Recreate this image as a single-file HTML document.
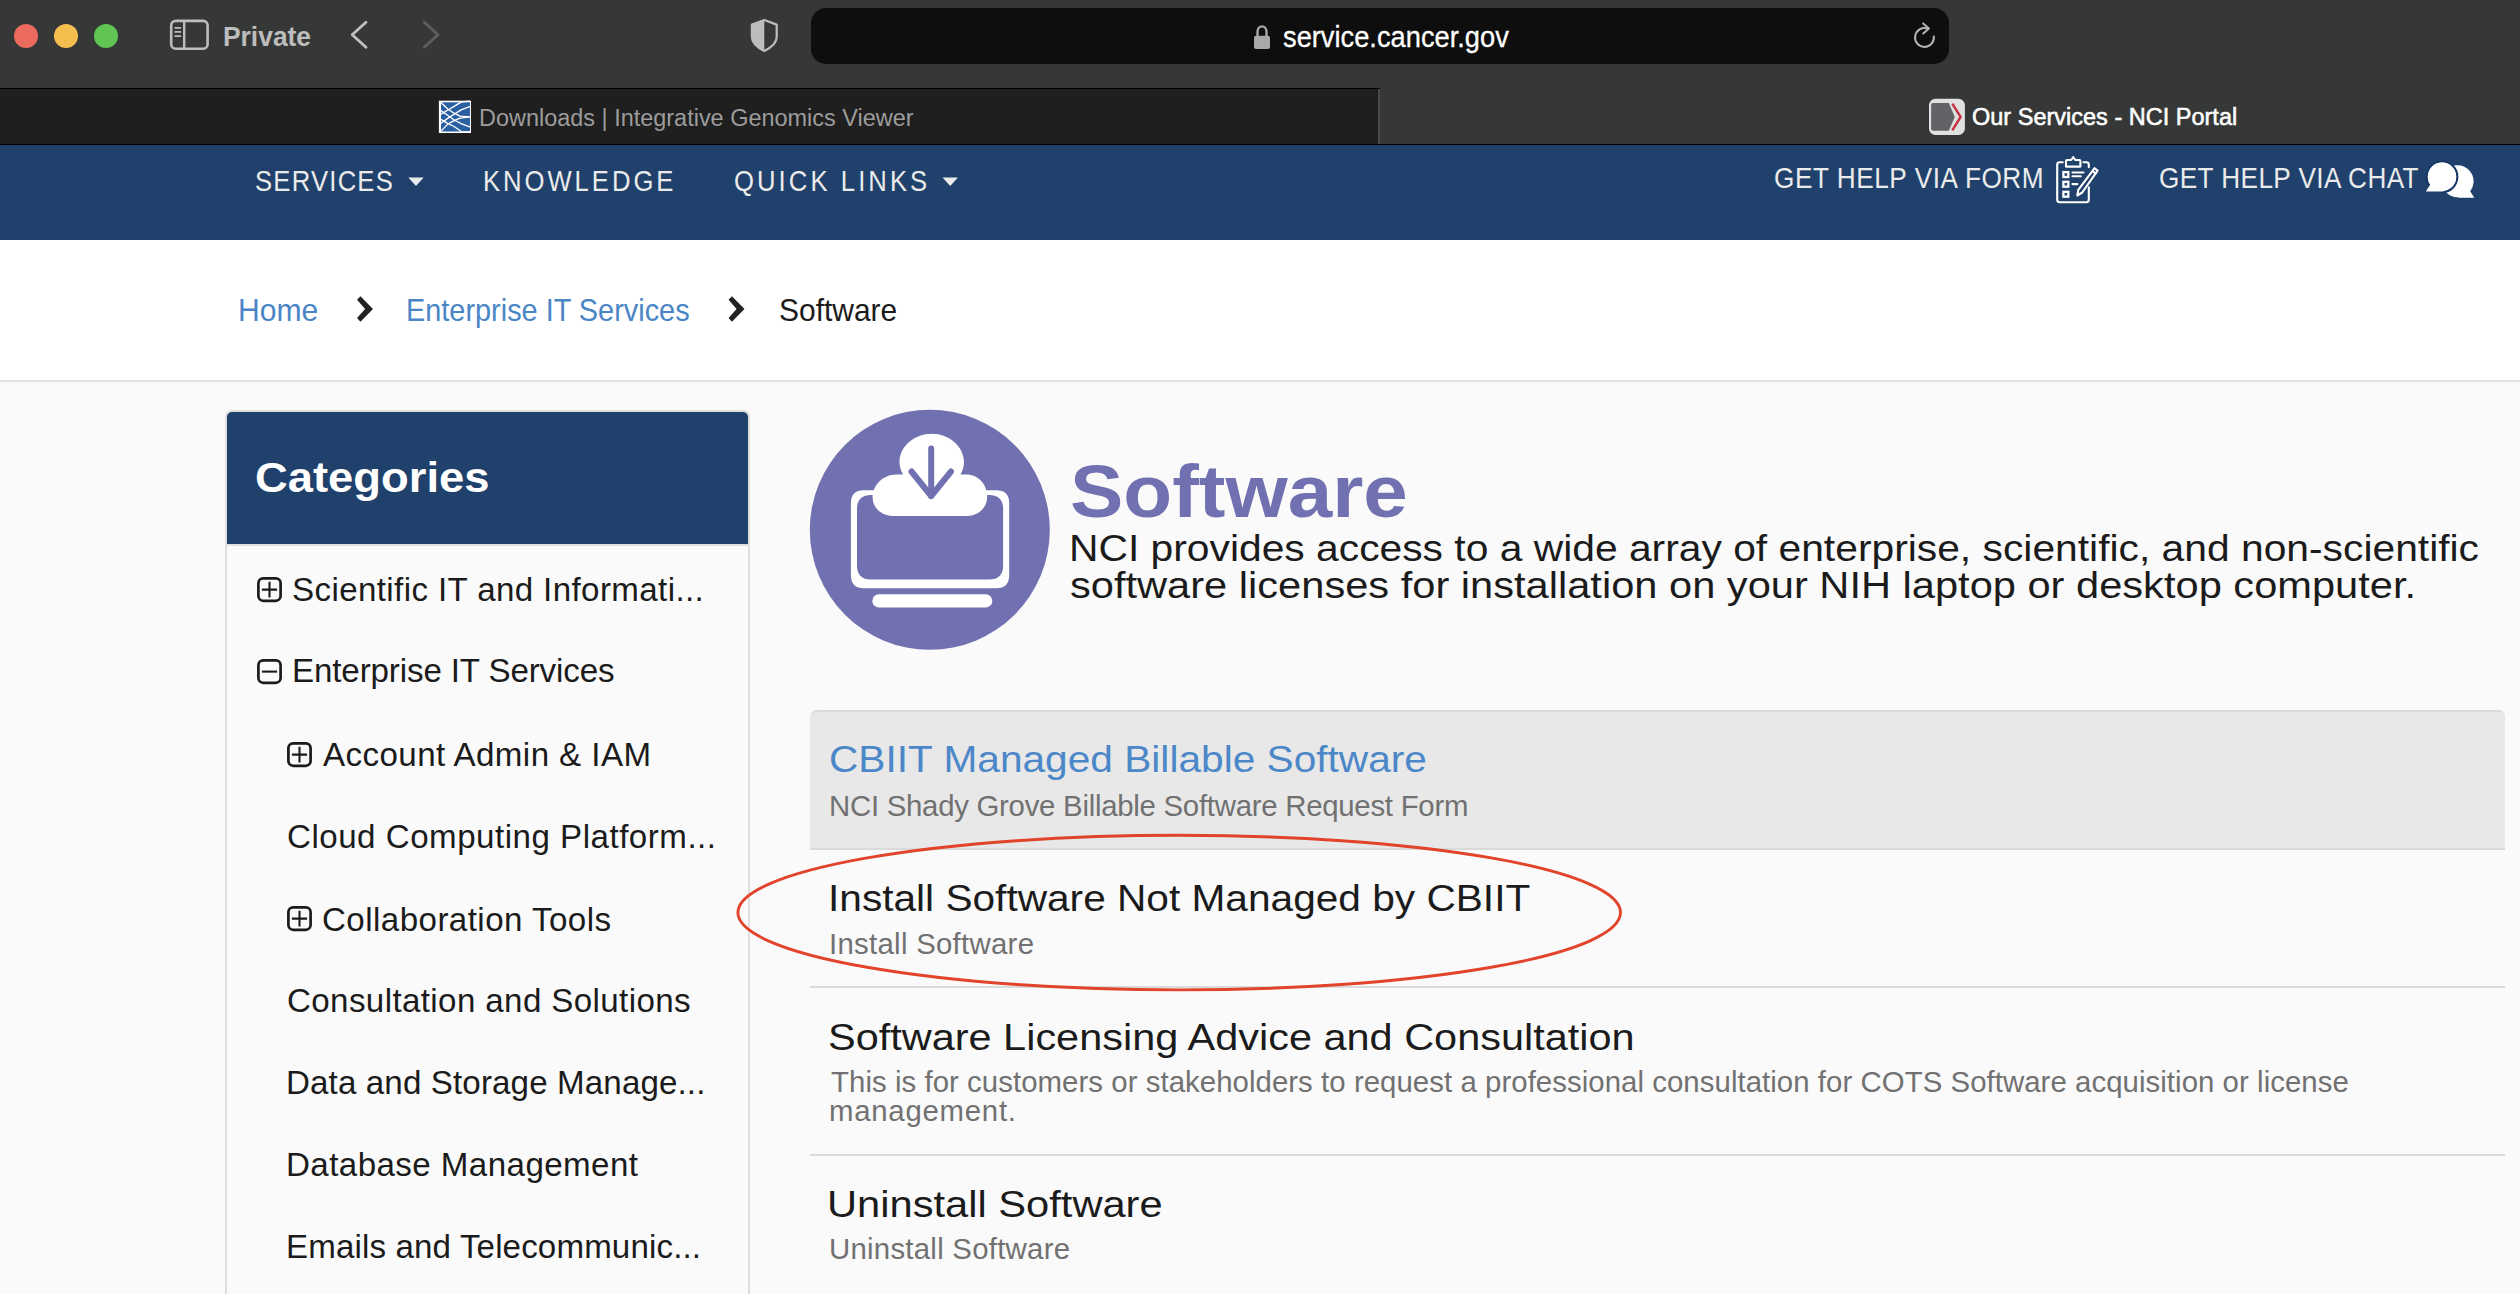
<!DOCTYPE html>
<html><head><meta charset="utf-8"><title>Our Services - NCI Portal</title>
<style>
html,body{margin:0;padding:0;}
body{width:2520px;height:1294px;overflow:hidden;position:relative;background:#fafafa;font-family:"Liberation Sans",sans-serif;}
.a{position:absolute;}
.t{position:absolute;white-space:nowrap;font-family:"Liberation Sans",sans-serif;}
svg{position:absolute;overflow:visible;}
</style></head>
<body>
<!-- Safari toolbar -->
<div class="a" style="left:0;top:0;width:2520px;height:145px;background:#363837"></div>
<div class="a" style="left:14px;top:24px;width:24.4px;height:24.4px;border-radius:50%;background:#ed6a5e"></div>
<div class="a" style="left:54px;top:24px;width:24.4px;height:24.4px;border-radius:50%;background:#f5bf4f"></div>
<div class="a" style="left:94px;top:24px;width:24.4px;height:24.4px;border-radius:50%;background:#61c554"></div>
<svg style="left:0;top:0" width="2520" height="88">
  <!-- sidebar icon -->
  <rect x="171.2" y="20.9" width="36.4" height="27.8" rx="4.5" fill="none" stroke="#bdbdbd" stroke-width="2.6"/>
  <line x1="184.2" y1="21" x2="184.2" y2="48.6" stroke="#bdbdbd" stroke-width="2.4"/>
  <line x1="175.2" y1="27.8" x2="180.4" y2="27.8" stroke="#bdbdbd" stroke-width="1.8" stroke-linecap="round"/>
  <line x1="175.2" y1="31.9" x2="180.4" y2="31.9" stroke="#bdbdbd" stroke-width="1.8" stroke-linecap="round"/>
  <line x1="175.2" y1="36.2" x2="180.4" y2="36.2" stroke="#bdbdbd" stroke-width="1.8" stroke-linecap="round"/>
  <!-- back / forward -->
  <polyline points="366,22.3 352.2,34.8 366,47.3" fill="none" stroke="#bfbfbf" stroke-width="2.9" stroke-linecap="round" stroke-linejoin="round"/>
  <polyline points="424.2,22.3 438,34.8 424.2,47.3" fill="none" stroke="#5d5d5d" stroke-width="2.9" stroke-linecap="round" stroke-linejoin="round"/>
  <!-- shield -->
  <path d="M764.3,20 L776.7,24.6 L776.7,37 C776.7,43.5 771,47.6 764.3,51 C757.6,47.6 751.9,43.5 751.9,37 L751.9,24.6 Z" fill="none" stroke="#bdbdbd" stroke-width="2.2" stroke-linejoin="round"/>
  <path d="M764.3,20 L751.9,24.6 L751.9,37 C751.9,43.5 757.6,47.6 764.3,51 Z" fill="#bdbdbd"/>
</svg>
<!-- address bar -->
<div class="a" style="left:811px;top:8px;width:1138px;height:56px;border-radius:15px;background:#0e0e0e"></div>
<svg style="left:0;top:0" width="2520" height="88">
  <path d="M1257.5,36.5 L1257.5,31.8 C1257.5,24.5 1266.5,24.5 1266.5,31.8 L1266.5,36.5" fill="none" stroke="#a9a9a9" stroke-width="2.4"/>
  <rect x="1254" y="35.7" width="16" height="13.2" rx="2" fill="#a9a9a9"/>
  <!-- reload -->
  <path d="M1927.5,28.6 A9.4,9.4 0 1 0 1933.8,36.4" fill="none" stroke="#b4b4b4" stroke-width="2" stroke-linecap="round"/>
  <polyline points="1923.2,23.4 1928.9,28.4 1923.2,33.5" fill="none" stroke="#b4b4b4" stroke-width="2" stroke-linecap="round" stroke-linejoin="round"/>
</svg>
<!-- tab bar -->
<div class="a" style="left:0;top:88px;width:1380px;height:56px;background:#1f1f1f;border-top:1.5px solid #000;box-sizing:border-box"></div>
<div class="a" style="left:1378px;top:89px;width:2px;height:55px;background:#4a4a4a"></div>
<div class="a" style="left:0;top:143.5px;width:2520px;height:1.6px;background:#000"></div>
<svg style="left:0;top:88" width="2520" height="58">
  <!-- IGV favicon -->
  <rect x="438.9" y="12.7" width="32.1" height="32.3" fill="#ffffff"/>
  <rect x="441" y="14.3" width="29" height="29.2" fill="#2a60a2"/>
  <g fill="none" stroke="#ffffff" stroke-width="1.35" stroke-linejoin="round" transform="translate(0,-88)">
    <polyline points="441,102.5 448,109.3 454.1,113.2 460,116.1 470.5,116.8"/>
    <polyline points="441,131.1 448,123.9 454.1,120.7 460,118.1 470.5,116.8"/>
    <polyline points="441,114.2 448,110 454.1,106.4 461.6,101.8 470,101.2"/>
    <polyline points="441,119.4 448,123.6 454.1,126.5 461.6,131.7 470,132"/>
    <polyline points="441,110.6 448,115.5 454.1,120 461.6,123.9 470.5,127.2"/>
    <polyline points="441,123.3 448,118.1 454.1,114.2 461.6,109.6 470.5,106.4"/>
  </g>
  <!-- NCI favicon -->
  <rect x="1929" y="10.8" width="35.9" height="36.1" rx="6.4" fill="#e0e0e0"/>
  <path d="M1933.3,15.1 L1948.8,15.1 L1954.8,28.9 L1948.8,42.8 L1933.3,42.8 Q1931.1,42.8 1931.1,40.6 L1931.1,17.3 Q1931.1,15.1 1933.3,15.1 Z" fill="#626366"/>
  <polyline points="1952.3,15.6 1960.6,28.9 1952.3,42.3" fill="none" stroke="#c4303f" stroke-width="2.4"/>
</svg>
<!-- NCI nav -->
<div class="a" style="left:0;top:145px;width:2520px;height:95px;background:#20416b"></div>
<svg style="left:0;top:145" width="2520" height="95">
  <polygon points="408.3,32.6 423.7,32.6 416,40.9" fill="#ebebeb"/>
  <polygon points="942.5,32.6 957.9,32.6 950.2,40.9" fill="#ebebeb"/>
  <!-- form icon -->
  <g transform="translate(0,-145)">
  <g fill="none" stroke="#ffffff" stroke-width="2.1" stroke-linecap="round" stroke-linejoin="round">
    <path d="M2062.7,162.2 L2059.6,162.2 Q2057.2,162.2 2057.2,164.6 L2057.2,199.8 Q2057.2,202.2 2059.6,202.2 L2086.4,202.2 Q2088.8,202.2 2088.8,199.8 L2088.8,187.4"/>
    <path d="M2083.5,162.2 L2086.4,162.2 Q2088.8,162.2 2088.8,164.6 L2088.8,167.3"/>
    <path d="M2066,166.6 L2066,161 Q2066,160 2067,160 L2071.2,160 L2073.2,157.2 L2075.2,160 L2079.4,160 Q2080.4,160 2080.4,161 L2080.4,166.6 Z"/>
    <path d="M2072.5,172.5 L2083.5,172.5 M2072.5,176.3 L2080.8,176.3 M2072.5,184.1 L2077.4,184.1"/>
    <path d="M2094.6,168.2 L2097.6,170.6 L2082.2,192.5 L2077.3,195.5 L2078.3,189.8 Z"/>
    <path d="M2092.8,171.3 L2095.6,173.5"/>
  </g>
  <g fill="none" stroke="#ffffff" stroke-width="2.3">
    <rect x="2063.4" y="172.1" width="4.9" height="4.9"/>
    <rect x="2063.4" y="181.8" width="4.9" height="4.9"/>
    <rect x="2063.4" y="191.8" width="4.9" height="4.9"/>
  </g>
  </g>
  <!-- chat icon -->
  <g transform="translate(0,-145)">
    <circle cx="2457.6" cy="181.2" r="16" fill="#ffffff"/>
    <polygon points="2458,197.8 2474.3,197.8 2467.5,187" fill="#ffffff"/>
    <g stroke="#173764" stroke-width="2.2" fill="#ffffff" stroke-linejoin="round">
      <circle cx="2442" cy="176.8" r="15.3"/>
    </g>
    <polygon points="2425.9,191.6 2443.6,191.6 2432.2,181.5" fill="#ffffff"/>
    <circle cx="2442" cy="176.8" r="14.2" fill="#ffffff"/>
  </g>
</svg>
<!-- breadcrumb band -->
<div class="a" style="left:0;top:240px;width:2520px;height:140px;background:#ffffff"></div>
<div class="a" style="left:0;top:380px;width:2520px;height:2px;background:#dfe2e5"></div>
<svg style="left:0;top:240" width="2520" height="140">
  <polygon points="357.06,59.74 360.46,56.18 372.98,69.01 360.46,81.84 357.06,77.97 365.09,69.01" fill="#222222"/>
  <polygon points="728.56,59.74 731.96,56.18 744.48,69.01 731.96,81.84 728.56,77.97 736.59,69.01" fill="#222222"/>
</svg>
<!-- sidebar -->
<div class="a" style="left:225.4px;top:410px;width:524.6px;height:884px;border:2px solid #e0dfde;border-bottom:0;border-radius:7px 7px 0 0;box-sizing:border-box;background:#fafafa"></div>
<div class="a" style="left:227.4px;top:412px;width:520.6px;height:132px;border-radius:5px 5px 0 0;background:#20416b"></div>
<div class="a" style="left:227.4px;top:544px;width:520.6px;height:2px;background:#e0e0e0"></div>
<svg style="left:0;top:0" width="2520" height="1294">
  <g fill="none" stroke="#1b1b1b" stroke-width="2.7">
    <rect x="258.4" y="578.4" width="22.2" height="22.4" rx="4.8"/>
    <rect x="258.4" y="660.4" width="22.2" height="22.4" rx="4.8"/>
    <rect x="288.4" y="743.4" width="22.2" height="22.4" rx="4.8"/>
    <rect x="288.4" y="907.4" width="22.2" height="22.4" rx="4.8"/>
  </g>
  <g fill="none" stroke="#1b1b1b" stroke-width="2.1">
    <path d="M261.9,589.6 L277.1,589.6 M269.5,581.8 L269.5,597.4"/>
    <path d="M261.9,671.6 L277.1,671.6"/>
    <path d="M291.9,754.6 L307.1,754.6 M299.5,746.8 L299.5,762.4"/>
    <path d="M291.9,918.6 L307.1,918.6 M299.5,910.8 L299.5,926.4"/>
  </g>
</svg>
<!-- header circle icon -->
<svg style="left:0;top:0" width="2520" height="1294">
  <circle cx="929.8" cy="529.8" r="120" fill="#7170b0"/>
  <path d="M863.9,490.3 L996.2,490.3 Q1009.2,490.3 1009.2,503.3 L1009.2,575.3 Q1009.2,588.3 996.2,588.3 L863.9,588.3 Q850.9,588.3 850.9,575.3 L850.9,503.3 Q850.9,490.3 863.9,490.3 Z M871,495 L989.1,495 Q1003.1,495 1003.1,509 L1003.1,565.4 Q1003.1,579.4 989.1,579.4 L871,579.4 Q857,579.4 857,565.4 L857,509 Q857,495 871,495 Z" fill="#ffffff" fill-rule="evenodd"/>
  <rect x="872.3" y="594.3" width="120" height="13.2" rx="6.6" fill="#ffffff"/>
  <path d="M893.5,516 C883,516 872.6,509 872.6,497.5 C872.6,485.5 882.5,474.5 896.5,474.5 L903,474.5 C900.5,470 899.5,466 899.5,462 C899.5,446.5 914.5,433.7 931.8,433.7 C949,433.7 964,446.5 964,462 C964,466 963,470 960.5,474.5 L966,474.5 C979,474.5 987.2,485 987.2,496.5 C987.2,508 978,516 967,516 Z" fill="#ffffff"/>
  <g fill="none" stroke="#7170b0" stroke-width="6" stroke-linecap="round" stroke-linejoin="round">
    <line x1="931.2" y1="448.5" x2="931.2" y2="496"/>
    <polyline points="911.5,471.5 931.2,496 951,471.5"/>
  </g>
</svg>
<!-- list -->
<div class="a" style="left:810px;top:710px;width:1695px;height:139.5px;background:#e8e8e8;border-top:2px solid #dadada;border-bottom:2.5px solid #dadada;border-radius:7px 7px 0 0;box-sizing:border-box"></div>
<div class="a" style="left:810px;top:986px;width:1695px;height:2px;background:#dadada"></div>
<div class="a" style="left:810px;top:1154px;width:1695px;height:2px;background:#dadada"></div>
<span id="t_private" class="t" style="left:223.00px;top:21.1px;font-size:28.05px;line-height:31.34px;color:#bdbdbd;font-weight:700;letter-spacing:0.001px;transform:scaleX(0.9409);transform-origin:0 0;-webkit-text-stroke:0px">Private</span>
<span id="t_url" class="t" style="left:1283.00px;top:20.4px;font-size:29.53px;line-height:32.99px;color:#ffffff;font-weight:400;letter-spacing:-0.000px;transform:scaleX(0.9237);transform-origin:0 0;-webkit-text-stroke:0.3px #ffffff">service.cancer.gov</span>
<span id="t_tab1" class="t" style="left:479.20px;top:103.8px;font-size:24.42px;line-height:27.28px;color:#9c9c9c;font-weight:400;letter-spacing:0.000px;transform:scaleX(0.9609);transform-origin:0 0">Downloads | Integrative Genomics Viewer</span>
<span id="t_tab2" class="t" style="left:1972.20px;top:104.2px;font-size:23.55px;line-height:26.31px;color:#ffffff;font-weight:400;letter-spacing:-0.000px;transform:scaleX(0.9984);transform-origin:0 0;-webkit-text-stroke:0.55px #ffffff">Our Services - NCI Portal</span>
<span id="t_services" class="t" style="left:255.00px;top:163.5px;font-size:29.80px;line-height:33.29px;color:#ebebeb;font-weight:400;letter-spacing:1.439px;transform:scaleX(0.8600);transform-origin:0 0">SERVICES</span>
<span id="t_knowledge" class="t" style="left:483.00px;top:163.5px;font-size:29.80px;line-height:33.29px;color:#ebebeb;font-weight:400;letter-spacing:3.461px;transform:scaleX(0.8600);transform-origin:0 0">KNOWLEDGE</span>
<span id="t_quick" class="t" style="left:734.20px;top:163.5px;font-size:29.80px;line-height:33.29px;color:#ebebeb;font-weight:400;letter-spacing:3.588px;transform:scaleX(0.8600);transform-origin:0 0">QUICK LINKS</span>
<span id="t_form" class="t" style="left:1774.20px;top:162.1px;font-size:29.07px;line-height:32.48px;color:#ebebeb;font-weight:400;letter-spacing:0.620px;transform:scaleX(0.9000);transform-origin:0 0">GET HELP VIA FORM</span>
<span id="t_chat" class="t" style="left:2159.20px;top:162.1px;font-size:29.07px;line-height:32.48px;color:#ebebeb;font-weight:400;letter-spacing:0.463px;transform:scaleX(0.9000);transform-origin:0 0">GET HELP VIA CHAT</span>
<span id="t_bc1" class="t" style="left:237.80px;top:293.0px;font-size:31.40px;line-height:35.08px;color:#4a86c6;font-weight:400;letter-spacing:-0.003px;transform:scaleX(0.9589);transform-origin:0 0">Home</span>
<span id="t_bc2" class="t" style="left:406.00px;top:293.0px;font-size:31.40px;line-height:35.08px;color:#4a86c6;font-weight:400;letter-spacing:0.000px;transform:scaleX(0.9202);transform-origin:0 0">Enterprise IT Services</span>
<span id="t_bc3" class="t" style="left:778.60px;top:293.0px;font-size:31.40px;line-height:35.08px;color:#1b1b1b;font-weight:400;letter-spacing:-0.000px;transform:scaleX(0.9544);transform-origin:0 0">Software</span>
<span id="t_cat" class="t" style="left:255.40px;top:454.3px;font-size:42.15px;line-height:47.09px;color:#ffffff;font-weight:700;letter-spacing:0.000px;transform:scaleX(1.0764);transform-origin:0 0">Categories</span>
<span id="t_s1" class="t" style="left:292.00px;top:570.5px;font-size:33.14px;line-height:37.02px;color:#1b1b1b;font-weight:400;letter-spacing:0.381px">Scientific IT and Informati...</span>
<span id="t_s2" class="t" style="left:292.00px;top:652.4px;font-size:33.14px;line-height:37.02px;color:#1b1b1b;font-weight:400;letter-spacing:-0.126px">Enterprise IT Services</span>
<span id="t_s3" class="t" style="left:323.00px;top:736.0px;font-size:33.14px;line-height:37.02px;color:#1b1b1b;font-weight:400;letter-spacing:0.425px">Account Admin &amp; IAM</span>
<span id="t_s4" class="t" style="left:287.00px;top:818.0px;font-size:33.14px;line-height:37.02px;color:#1b1b1b;font-weight:400;letter-spacing:0.496px">Cloud Computing Platform...</span>
<span id="t_s5" class="t" style="left:322.00px;top:900.5px;font-size:33.14px;line-height:37.02px;color:#1b1b1b;font-weight:400;letter-spacing:0.437px">Collaboration Tools</span>
<span id="t_s6" class="t" style="left:287.00px;top:981.5px;font-size:33.14px;line-height:37.02px;color:#1b1b1b;font-weight:400;letter-spacing:0.381px">Consultation and Solutions</span>
<span id="t_s7" class="t" style="left:286.00px;top:1064.0px;font-size:33.14px;line-height:37.02px;color:#1b1b1b;font-weight:400;letter-spacing:0.129px">Data and Storage Manage...</span>
<span id="t_s8" class="t" style="left:286.00px;top:1146.0px;font-size:33.14px;line-height:37.02px;color:#1b1b1b;font-weight:400;letter-spacing:0.424px">Database Management</span>
<span id="t_s9" class="t" style="left:286.00px;top:1228.2px;font-size:33.14px;line-height:37.02px;color:#1b1b1b;font-weight:400;letter-spacing:0.129px">Emails and Telecommunic...</span>
<span id="t_title" class="t" style="left:1070.00px;top:451.2px;font-size:74.13px;line-height:82.82px;color:#7170b0;font-weight:700;letter-spacing:0.001px;transform:scaleX(1.0795);transform-origin:0 0">Software</span>
<span id="t_d1" class="t" style="left:1069.00px;top:528.8px;font-size:36.34px;line-height:40.60px;color:#1b1b1b;font-weight:400;letter-spacing:0.000px;transform:scaleX(1.1227);transform-origin:0 0">NCI provides access to a wide array of enterprise, scientific, and non-scientific</span>
<span id="t_d2" class="t" style="left:1070.00px;top:566.4px;font-size:36.34px;line-height:40.60px;color:#1b1b1b;font-weight:400;letter-spacing:0.001px;transform:scaleX(1.1453);transform-origin:0 0">software licenses for installation on your NIH laptop or desktop computer.</span>
<span id="t_i1" class="t" style="left:829.00px;top:740.0px;font-size:36.48px;line-height:40.76px;color:#4c87c8;font-weight:400;letter-spacing:-0.001px;transform:scaleX(1.1146);transform-origin:0 0">CBIIT Managed Billable Software</span>
<span id="t_i1s" class="t" style="left:829.00px;top:790.1px;font-size:29.36px;line-height:32.80px;color:#717171;font-weight:400;letter-spacing:-0.260px">NCI Shady Grove Billable Software Request Form</span>
<span id="t_i2" class="t" style="left:828.00px;top:878.9px;font-size:36.48px;line-height:40.76px;color:#1b1b1b;font-weight:400;letter-spacing:0.001px;transform:scaleX(1.1139);transform-origin:0 0">Install Software Not Managed by CBIIT</span>
<span id="t_i2s" class="t" style="left:829.00px;top:927.6px;font-size:29.36px;line-height:32.80px;color:#717171;font-weight:400;letter-spacing:0.285px">Install Software</span>
<span id="t_i3" class="t" style="left:828.00px;top:1018.0px;font-size:36.48px;line-height:40.76px;color:#1b1b1b;font-weight:400;letter-spacing:0.000px;transform:scaleX(1.1368);transform-origin:0 0">Software Licensing Advice and Consultation</span>
<span id="t_i3s" class="t" style="left:831.00px;top:1066.3px;font-size:29.36px;line-height:32.80px;color:#717171;font-weight:400;letter-spacing:0.058px">This is for customers or stakeholders to request a professional consultation for COTS Software acquisition or license</span>
<span id="t_i3s2" class="t" style="left:829.00px;top:1095.3px;font-size:29.36px;line-height:32.80px;color:#717171;font-weight:400;letter-spacing:0.747px">management.</span>
<span id="t_i4" class="t" style="left:827.00px;top:1184.5px;font-size:36.48px;line-height:40.76px;color:#1b1b1b;font-weight:400;letter-spacing:-0.001px;transform:scaleX(1.1421);transform-origin:0 0">Uninstall Software</span>
<span id="t_i4s" class="t" style="left:829.00px;top:1233.3px;font-size:29.36px;line-height:32.80px;color:#717171;font-weight:400;letter-spacing:0.258px">Uninstall Software</span>
<svg style="left:0;top:0" width="2520" height="1294">
  <ellipse cx="1179.2" cy="912.6" rx="441.3" ry="77.3" fill="none" stroke="#e2432b" stroke-width="2.9"/>
</svg>
</body></html>
